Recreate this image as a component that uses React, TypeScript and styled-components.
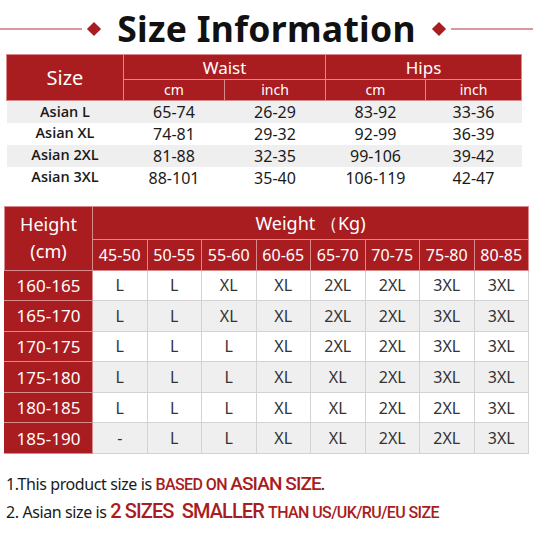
import styled, { createGlobalStyle } from "styled-components";

const RED = "#a91c20";

const GlobalStyle = createGlobalStyle`
  body {
    margin: 0;
    background: #fff;
    font-family: "Noto Sans", "Open Sans", sans-serif;
  }
`;

const Page = styled.div`
  width: 533px;
  height: 533px;
  overflow: hidden;
  display: flex;
  flex-direction: column;
`;

const TitleBar = styled.div`
  height: 54px;
  display: flex;
  align-items: center;
  padding-top: 4px;
  box-sizing: border-box;
`;

const Line = styled.div`
  flex: 1;
  height: 2px;
  background: #d99a9c;
`;

const Diamond = styled.span`
  width: 10px;
  height: 10px;
  background: ${RED};
  transform: rotate(45deg);
  margin: 0 7px;
`;

const Title = styled.h1`
  margin: 0 11px;
  font-size: 35.5px;
  font-weight: 700;
  color: #111;
  letter-spacing: 0.3px;
  line-height: 1;
`;

const Table = styled.table<{ $left: number; $width: number }>`
  margin-left: ${(p) => p.$left}px;
  width: ${(p) => p.$width}px;
  border-collapse: collapse;
  table-layout: fixed;
  text-align: center;
`;

const Head = styled.th<{ $size: number; $h?: number }>`
  background: ${RED};
  color: #fff;
  font-weight: 400;
  font-size: ${(p) => p.$size}px;
  height: ${(p) => p.$h ?? 20}px;
  padding: 0;
  border: 1px solid #d98a8c;
  line-height: 1;
`;

const Row = styled.tr<{ $gray: boolean; $h: number }>`
  background: ${(p) => (p.$gray ? "#efefef" : "#fff")};
  height: ${(p) => p.$h}px;
`;

const Cell = styled.td<{ $bold?: boolean }>`
  padding: 0;
  font-size: ${(p) => (p.$bold ? 14.5 : 16)}px;
  font-family: ${(p) => (p.$bold ? `"Open Sans", "Noto Sans", sans-serif` : `"Noto Sans", sans-serif`)};
  font-weight: ${(p) => (p.$bold ? 600 : 400)};
  color: #1a1a1a;
  line-height: 1;
`;

const GridCell = styled.td`
  padding: 0;
  font-size: 16px;
  color: #333;
  border: 1px solid #d3d3d3;
  line-height: 1;
`;

const SideCell = styled.td`
  padding: 0;
  background: ${RED};
  color: #fff;
  font-size: 17px;
  border: 1px solid #d98a8c;
  border-left-color: ${RED};
  line-height: 1;
`;

const Notes = styled.div`
  margin-top: 17px;
  padding-left: 6px;
  display: flex;
  flex-direction: column;
  gap: 2px;
`;

const Note = styled.p`
  margin: 0;
  font-size: 16px;
  letter-spacing: -0.4px;
  color: #1a1a1a;
  line-height: 25px;
  white-space: nowrap;
`;

const Red = styled.span<{ $size: number; $track: number }>`
  color: ${RED};
  font-family: Roboto, "Noto Sans", sans-serif;
  font-weight: 500;
  font-size: ${(p) => p.$size}px;
  letter-spacing: ${(p) => p.$track}px;
`;

const sizes = [
  ["Asian L", "65-74", "26-29", "83-92", "33-36"],
  ["Asian XL", "74-81", "29-32", "92-99", "36-39"],
  ["Asian 2XL", "81-88", "32-35", "99-106", "39-42"],
  ["Asian 3XL", "88-101", "35-40", "106-119", "42-47"],
];

const weights = ["45-50", "50-55", "55-60", "60-65", "65-70", "70-75", "75-80", "80-85"];

const chart: [string, string[]][] = [
  ["160-165", ["L", "L", "XL", "XL", "2XL", "2XL", "3XL", "3XL"]],
  ["165-170", ["L", "L", "XL", "XL", "2XL", "2XL", "3XL", "3XL"]],
  ["170-175", ["L", "L", "L", "XL", "2XL", "2XL", "3XL", "3XL"]],
  ["175-180", ["L", "L", "L", "XL", "XL", "2XL", "3XL", "3XL"]],
  ["180-185", ["L", "L", "L", "XL", "XL", "2XL", "2XL", "3XL"]],
  ["185-190", ["-", "L", "L", "XL", "XL", "2XL", "2XL", "3XL"]],
];

const App = () => {
  return (
    <Page>
      <GlobalStyle />
      <TitleBar>
        <Line />
        <Diamond />
        <Title>Size Information</Title>
        <Diamond />
        <Line />
      </TitleBar>

      <Table $left={6} $width={515}>
        <colgroup>
          <col style={{ width: 117 }} />
          <col style={{ width: 101 }} />
          <col style={{ width: 101 }} />
          <col style={{ width: 100 }} />
          <col style={{ width: 96 }} />
        </colgroup>
        <thead>
          <tr>
            <Head $size={20} rowSpan={2}>Size</Head>
            <Head $size={17} $h={24} colSpan={2}>Waist</Head>
            <Head $size={17} $h={24} colSpan={2}>Hips</Head>
          </tr>
          <tr>
            <Head $size={14}>cm</Head>
            <Head $size={14}>inch</Head>
            <Head $size={14}>cm</Head>
            <Head $size={14}>inch</Head>
          </tr>
        </thead>
        <tbody>
          {sizes.map((r, i) => (
            <Row key={r[0]} $gray={i % 2 === 0} $h={22}>
              {r.map((v, j) => (
                <Cell key={j} $bold={j === 0}>{v}</Cell>
              ))}
            </Row>
          ))}
        </tbody>
      </Table>

      <Table $left={4} $width={525} style={{ marginTop: 17 }}>
        <colgroup>
          <col style={{ width: 88 }} />
          {weights.map((w) => (
            <col key={w} />
          ))}
        </colgroup>
        <thead>
          <tr>
            <Head $size={18} rowSpan={2} style={{ lineHeight: "27px" }}>
              Height
              <br />
              (cm)
            </Head>
            <Head $size={18} $h={32} colSpan={8}>Weight （Kg)</Head>
          </tr>
          <tr>
            {weights.map((w) => (
              <Head key={w} $size={16} $h={30}>{w}</Head>
            ))}
          </tr>
        </thead>
        <tbody>
          {chart.map(([h, vals], i) => (
            <Row key={h} $gray={i % 2 === 1} $h={30.6}>
              <SideCell>{h}</SideCell>
              {vals.map((v, j) => (
                <GridCell key={j}>{v}</GridCell>
              ))}
            </Row>
          ))}
        </tbody>
      </Table>

      <Notes>
        <Note>
          1.This product size is <Red $size={16} $track={-0.6}>BASED ON </Red>
          <Red $size={19} $track={-0.9}>ASIAN SIZE</Red>.
        </Note>
        <Note>
          2. Asian size is <Red $size={20} $track={-0.9}>2 SIZES&nbsp; SMALLER </Red>
          <Red $size={16} $track={-0.6}>THAN US/UK/RU/EU SIZE</Red>
        </Note>
      </Notes>
    </Page>
  );
};

export default App;
